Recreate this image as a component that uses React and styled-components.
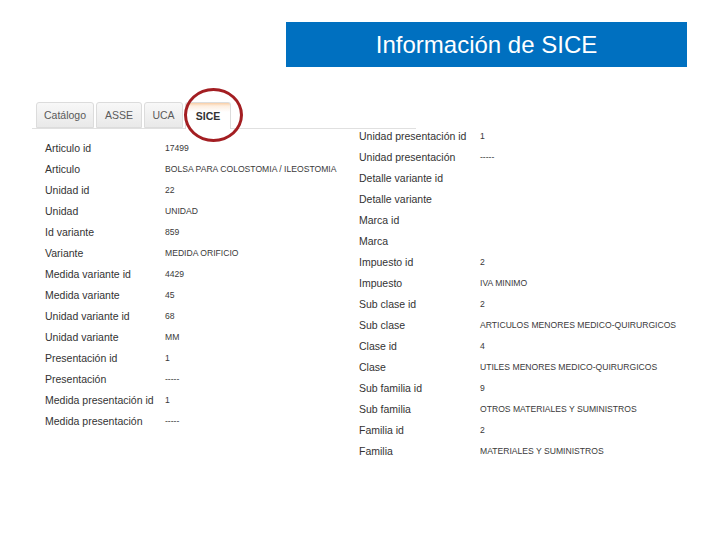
import React from 'react'
import styled, { createGlobalStyle } from 'styled-components'

const GlobalStyle = createGlobalStyle`
  html, body {
    margin: 0;
    padding: 0;
    background: #fff;
  }
  body {
    font-family: "Liberation Sans", Arial, sans-serif;
  }
`

const Page = styled.div`
  width: 720px;
  height: 540px;
  padding-top: 22px;
  box-sizing: border-box;
  overflow: hidden;
`

const TitleBar = styled.div`
  margin-left: 286px;
  width: 401px;
  height: 45px;
  background: #0070c0;
  color: #fff;
  font-size: 24px;
  line-height: 45px;
  text-align: center;
`

const Content = styled.div`
  display: flex;
  align-items: flex-start;
  margin-top: 35px;
  padding-left: 32px;
`

const LeftPanel = styled.div`
  width: 327px;
  flex-shrink: 0;
`

const TabBar = styled.div`
  position: relative;
  display: flex;
  align-items: flex-end;
  width: 380px;
  height: 26px;
  padding-left: 4px;
  box-sizing: content-box;
  border-bottom: 1px solid #e0e0e0;
`

const Tab = styled.div`
  width: ${p => p.$w}px;
  height: ${p => (p.$active ? 27 : 26)}px;
  margin-right: 2px;
  margin-bottom: ${p => (p.$active ? -1 : 0)}px;
  box-sizing: border-box;
  border: 1px solid #dcdcdc;
  border-bottom: ${p => (p.$active ? 'none' : '1px solid #dcdcdc')};
  border-radius: 3px 3px 0 0;
  background: ${p =>
    p.$active
      ? 'linear-gradient(#f9cfa6 0, #fdeee0 3px, #ffffff 9px)'
      : 'linear-gradient(#f8f8f8, #e9e9e9)'};
  color: ${p => (p.$active ? '#333' : '#5a5a5a')};
  font-weight: ${p => (p.$active ? 'bold' : 'normal')};
  font-size: 10.5px;
  display: flex;
  align-items: center;
  justify-content: center;
`

const Highlight = styled.div`
  position: absolute;
  left: 152px;
  top: -14px;
  width: 59px;
  height: 54px;
  box-sizing: border-box;
  border: 3px solid #a31e22;
  border-radius: 50%;
  pointer-events: none;
`

const Rows = styled.div`
  padding: ${p => p.$top}px 0 0 ${p => p.$left}px;
  height: ${p => (p.$height ? `${p.$height}px` : 'auto')};
  overflow: hidden;
`

const Row = styled.div`
  display: flex;
  align-items: center;
  height: 21px;
  color: #333;
  white-space: nowrap;
`

const Label = styled.div`
  width: ${p => p.$w}px;
  flex-shrink: 0;
  font-size: 10.5px;
`

const Value = styled.div`
  font-size: 8.6px;
  color: #3a3a3a;
`

const RightPanel = styled.div`
  flex: 1;
`

const tabs = [
  { name: 'Catálogo', w: 58 },
  { name: 'ASSE', w: 46 },
  { name: 'UCA', w: 39 },
  { name: 'SICE', w: 46, active: true },
]

const leftFields = [
  ['Articulo id', '17499'],
  ['Articulo', 'BOLSA PARA COLOSTOMIA / ILEOSTOMIA'],
  ['Unidad id', '22'],
  ['Unidad', 'UNIDAD'],
  ['Id variante', '859'],
  ['Variante', 'MEDIDA ORIFICIO'],
  ['Medida variante id', '4429'],
  ['Medida variante', '45'],
  ['Unidad variante id', '68'],
  ['Unidad variante', 'MM'],
  ['Presentación id', '1'],
  ['Presentación', '-----'],
  ['Medida presentación id', '1'],
  ['Medida presentación', '-----'],
]

const rightFields = [
  ['Unidad presentación id', '1'],
  ['Unidad presentación', '-----'],
  ['Detalle variante id', ''],
  ['Detalle variante', ''],
  ['Marca id', ''],
  ['Marca', ''],
  ['Impuesto id', '2'],
  ['Impuesto', 'IVA MINIMO'],
  ['Sub clase id', '2'],
  ['Sub clase', 'ARTICULOS MENORES MEDICO-QUIRURGICOS'],
  ['Clase id', '4'],
  ['Clase', 'UTILES MENORES MEDICO-QUIRURGICOS'],
  ['Sub familia id', '9'],
  ['Sub familia', 'OTROS MATERIALES Y SUMINISTROS'],
  ['Familia id', '2'],
  ['Familia', 'MATERIALES Y SUMINISTROS'],
]

const FieldList = ({ fields, labelWidth }) =>
  fields.map(([label, value]) => (
    <Row key={label}>
      <Label $w={labelWidth}>{label}</Label>
      <Value>{value}</Value>
    </Row>
  ))

export default function App() {
  return (
    <Page>
      <GlobalStyle />
      <TitleBar>Información de SICE</TitleBar>
      <Content>
        <LeftPanel>
          <TabBar>
            {tabs.map(t => (
              <Tab key={t.name} $w={t.w} $active={t.active}>
                {t.name}
              </Tab>
            ))}
            <Highlight />
          </TabBar>
          <Rows $top={8} $left={13}>
            <FieldList fields={leftFields} labelWidth={120} />
          </Rows>
        </LeftPanel>
        <RightPanel>
          <Rows $top={23} $left={0} $height={330}>
            <FieldList fields={rightFields} labelWidth={121} />
          </Rows>
        </RightPanel>
      </Content>
    </Page>
  )
}
